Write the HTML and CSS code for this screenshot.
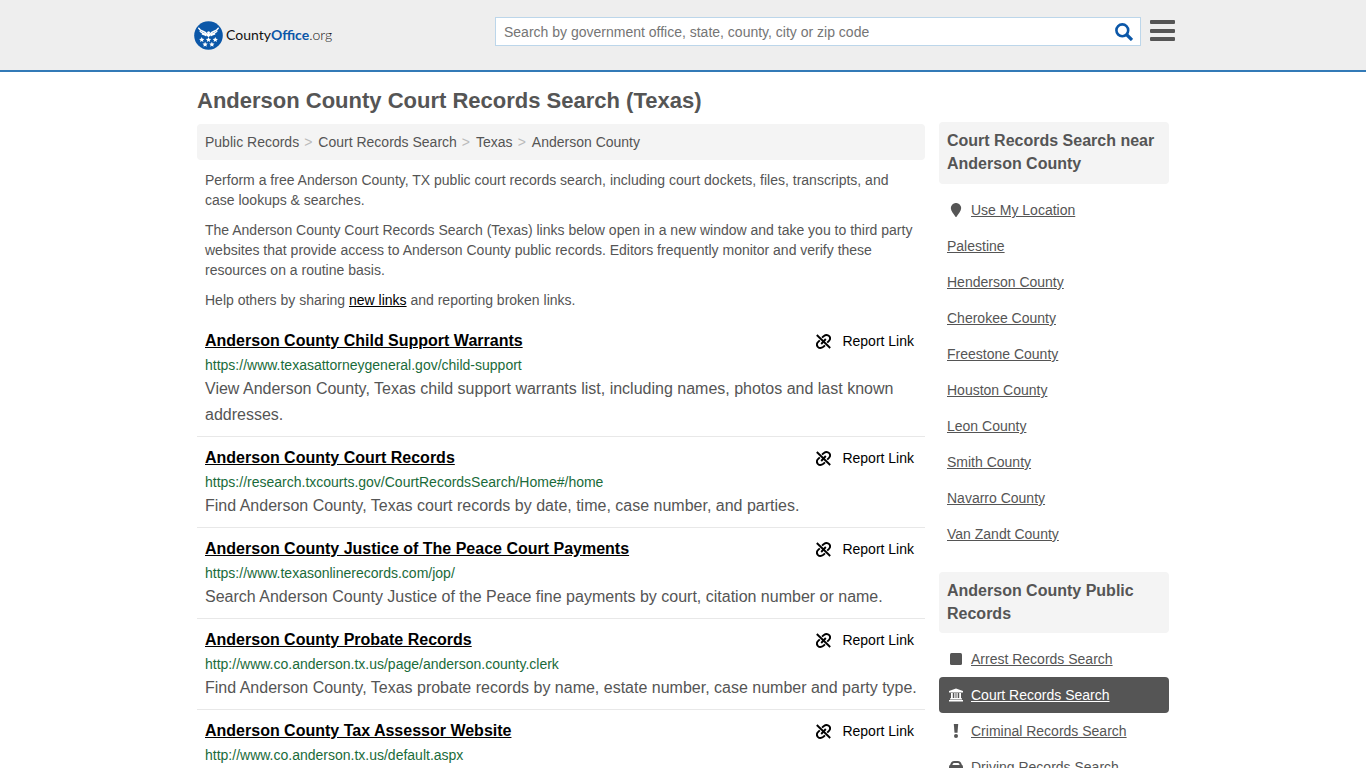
FILE: index.html
```html
<!DOCTYPE html>
<html lang="en">
<head>
<meta charset="utf-8">
<meta name="viewport" content="width=device-width, initial-scale=1">
<title>Anderson County Court Records Search (Texas)</title>
<link rel="stylesheet" href="styles.css">
</head>
<body>
<svg class="sprite" aria-hidden="true">
  <symbol id="i-unlink" viewBox="0 0 15 15">
    <g fill="none" stroke="currentColor" stroke-width="1.900">
      <path d="M.8 1 14.200 14"/>
      <path d="M6 3.600 7.600 2.200C9.500.8 12 1 13.200 2.200 14.300 3.600 14.200 5.600 13 6.800L11.200 8.600"/>
      <path d="M9 11.400 7.400 12.800C5.500 14.200 3 14 1.800 12.800.7 11.400.8 9.400 2 8.200L3.800 6.400"/>
      <path d="M9.800 5 5.200 10"/>
    </g>
  </symbol>
</svg>

<header class="site-header">
  <div class="header-inner">
    <a class="logo" href="#">
      <svg class="logo-mark" viewBox="0 0 30 30" aria-hidden="true">
        <circle cx="15" cy="15" r="14.800" fill="#0b57a8"/>
        <g fill="none" stroke="#fff" stroke-linecap="round">
          <path stroke-width="1.700" d="M5 7.500c1.500 3 4.500 2.700 6.500 4.200 1 .8 1.500 1.800 2.300 2.800M25 7.500c-1.500 3-4.500 2.700-6.500 4.200-1 .8-1.500 1.800-2.300 2.800"/>
          <path stroke-width="1.300" d="M6.300 10.800c1.700 1.800 3.700 1.500 5.700 3.200M23.700 10.800c-1.700 1.800-3.700 1.500-5.700 3.200M8.500 13.500c1.500.8 2.700.8 4 1.700M21.500 13.500c-1.500.8-2.700.8-4 1.700"/>
        </g>
        <path fill="#fff" d="M13.500 11.500 15 10.600l1.700.8-.5 1.200.8 2.400-2 1.700-2-1.700.8-2z"/>
        <g fill="#fff">
          <path id="star" d="M8 16.600l.8 1.700 1.900.2-1.400 1.300.4 1.900L8 20.800l-1.700.9.4-1.900-1.400-1.300 1.900-.2z"/>
          <use href="#star" x="7"/><use href="#star" x="14"/>
          <use href="#star" x="3.500" y="4.900"/><use href="#star" x="10.500" y="4.900"/>
        </g>
      </svg>
      <span class="logo-text">County<b>Office</b><span class="logo-tld">.org</span></span>
    </a>
    <form class="search" role="search">
      <input class="search-input" type="search" aria-label="Search" placeholder="Search by government office, state, county, city or zip code">
      <button class="search-button" type="button" aria-label="Submit search">
        <svg viewBox="0 0 18 18" aria-hidden="true"><circle cx="7.300" cy="7.300" r="5.900" fill="none" stroke="#0b57a8" stroke-width="2.600"/><path d="M11.500 11.500 17 17" stroke="#0b57a8" stroke-width="3.200"/></svg>
      </button>
    </form>
    <button class="menu-button" type="button" aria-label="Menu">
      <svg viewBox="0 0 25 22" aria-hidden="true"><path fill="#555" d="M1 0h23q1 0 1 1v2q0 1-1 1H1Q0 4 0 3V1q0-1 1-1zM1 9h23q1 0 1 1v2q0 1-1 1H1q-1 0-1-1v-2q0-1 1-1zM1 17h23q1 0 1 1v2q0 1-1 1H1q-1 0-1-1v-2q0-1 1-1z"/></svg>
    </button>
  </div>
</header>

<div class="page">
  <main class="main">
    <h1>Anderson County Court Records Search (Texas)</h1>
    <nav aria-label="Breadcrumb">
      <ol class="breadcrumb">
        <li><a href="#">Public Records</a></li>
        <li><a href="#">Court Records Search</a></li>
        <li><a href="#">Texas</a></li>
        <li><a href="#">Anderson County</a></li>
      </ol>
    </nav>
    <div class="intro">
      <p>Perform a free Anderson County, TX public court records search, including court dockets, files, transcripts, and case lookups &amp; searches.</p>
      <p>The Anderson County Court Records Search (Texas) links below open in a new window and take you to third party websites that provide access to Anderson County public records. Editors frequently monitor and verify these resources on a routine basis.</p>
      <p>Help others by sharing <a href="#">new links</a> and reporting broken links.</p>
    </div>
    <article class="record">
      <div class="record-head"><h2><a href="#">Anderson County Child Support Warrants</a></h2><a class="report" href="#"><svg aria-hidden="true"><use href="#i-unlink"/></svg>Report Link</a></div>
      <div class="url">https://www.texasattorneygeneral.gov/child-support</div>
      <p>View Anderson County, Texas child support warrants list, including names, photos and last known addresses.</p>
    </article>
    <article class="record">
      <div class="record-head"><h2><a href="#">Anderson County Court Records</a></h2><a class="report" href="#"><svg aria-hidden="true"><use href="#i-unlink"/></svg>Report Link</a></div>
      <div class="url">https://research.txcourts.gov/CourtRecordsSearch/Home#/home</div>
      <p>Find Anderson County, Texas court records by date, time, case number, and parties.</p>
    </article>
    <article class="record">
      <div class="record-head"><h2><a href="#">Anderson County Justice of The Peace Court Payments</a></h2><a class="report" href="#"><svg aria-hidden="true"><use href="#i-unlink"/></svg>Report Link</a></div>
      <div class="url">https://www.texasonlinerecords.com/jop/</div>
      <p>Search Anderson County Justice of the Peace fine payments by court, citation number or name.</p>
    </article>
    <article class="record">
      <div class="record-head"><h2><a href="#">Anderson County Probate Records</a></h2><a class="report" href="#"><svg aria-hidden="true"><use href="#i-unlink"/></svg>Report Link</a></div>
      <div class="url">http://www.co.anderson.tx.us/page/anderson.county.clerk</div>
      <p>Find Anderson County, Texas probate records by name, estate number, case number and party type.</p>
    </article>
    <article class="record">
      <div class="record-head"><h2><a href="#">Anderson County Tax Assessor Website</a></h2><a class="report" href="#"><svg aria-hidden="true"><use href="#i-unlink"/></svg>Report Link</a></div>
      <div class="url">http://www.co.anderson.tx.us/default.aspx</div>
    </article>
  </main>

  <aside class="sidebar">
    <section class="nearby">
      <h2>Court Records Search near Anderson County</h2>
      <ul>
        <li><a href="#"><svg viewBox="0 0 18 14" aria-hidden="true"><path d="M9 0a5 5 0 0 1 5.200 5c0 3-3 6-4.500 8.500q-.7 1-1.400 0C6.800 11 3.800 8 3.800 5A5 5 0 0 1 9 0z"/></svg><span>Use My Location</span></a></li>
        <li><a href="#"><span>Palestine</span></a></li>
        <li><a href="#"><span>Henderson County</span></a></li>
        <li><a href="#"><span>Cherokee County</span></a></li>
        <li><a href="#"><span>Freestone County</span></a></li>
        <li><a href="#"><span>Houston County</span></a></li>
        <li><a href="#"><span>Leon County</span></a></li>
        <li><a href="#"><span>Smith County</span></a></li>
        <li><a href="#"><span>Navarro County</span></a></li>
        <li><a href="#"><span>Van Zandt County</span></a></li>
      </ul>
    </section>
    <section>
      <h2>Anderson County Public Records</h2>
      <ul>
        <li><a href="#"><svg viewBox="0 0 18 14" aria-hidden="true"><rect x="3" y="1" width="12" height="12" rx="1.500"/></svg><span>Arrest Records Search</span></a></li>
        <li><a class="current" href="#" aria-current="page"><svg viewBox="0 0 18 14" aria-hidden="true"><path d="M9 .5 16 3v1.500H2V3zM4 5h1.800v5h1.500V5h1.200v5h1V5h1.200v5h1.500V5H14v5l1 .5v1H3v-1l1-.5zM2 12h14v1.600H2z"/></svg><span>Court Records Search</span></a></li>
        <li><a href="#"><svg viewBox="0 0 18 14" aria-hidden="true"><path d="M6.800 0h4.400l-.7 8.800h-3z"/><circle cx="9" cy="12" r="2"/></svg><span>Criminal Records Search</span></a></li>
        <li><a href="#"><svg viewBox="0 0 18 14" aria-hidden="true"><path fill-rule="evenodd" d="M7 1h4q2.200 0 3 1.800l.8 1.900Q16 5.300 16 7v6h-3v-2H5v2H2V7q0-1.700 1.200-2.300L4 2.800Q4.800 1 7 1zM7 3q-.8 0-1.100.7L5.300 5h7.400l-.6-1.300Q11.800 3 11 3z"/></svg><span>Driving Records Search</span></a></li>
      </ul>
    </section>
  </aside>
</div>
</body>
</html>
```
FILE: styles.css
```css
* { box-sizing: border-box; }
body { margin: 0; background: #fff; color: #555; font: 14px/20px "Liberation Sans", Arial, sans-serif; }
h1, h2, p, ul, ol { margin: 0; padding: 0; }
ul, ol { list-style: none; }
a { color: inherit; }
button { border: 0; padding: 0; background: none; cursor: pointer; }
.sprite { display: none; }

.site-header { background: #eee; border-bottom: 2px solid #337ab7; }
.header-inner { max-width: 984px; height: 70px; margin: 0 auto; padding: 0 0 0 3px; display: flex; align-items: center; }
.logo { display: flex; align-items: center; gap: 3px; flex: 1; text-decoration: none; color: #111; }
.logo-mark { width: 29px; height: 29px; }
.logo-text { font: 14px/20px Lato, sans-serif; }
.logo-text b { color: #0b57a8; }
.logo-tld { font-weight: 300; }
.search { display: flex; width: 646px; max-width: 66%; height: 29px; margin-bottom: 8px; border: 1px solid #bcd6ea; background: #fff; }
.search-input { flex: 1; min-width: 0; border: 0; padding: 2px 8px 0; background: none; font: inherit; color: #555; outline: 0; }
.search-input::placeholder { color: #757575; }
.search-button { width: 33px; padding-top: 1px; display: grid; place-items: center; }
.search-button svg { width: 18px; height: 18px; }
.menu-button { margin: 0 0 8px 9px; }
.menu-button svg { display: block; width: 25px; height: 22px; }

.page { max-width: 972px; margin: 0 auto; display: flex; gap: 14px; align-items: flex-start; }
.main { flex: 1; min-width: 0; padding-top: 17px; }
h1 { font-size: 22px; line-height: 24px; margin-bottom: 11px; }
.breadcrumb { display: flex; padding: 8px; background: #f4f4f4; border-radius: 4px; }
.breadcrumb a { text-decoration: none; }
.breadcrumb li + li::before { content: ">"; padding: 0 6px 0 5px; color: #bbb; }
.intro { padding: 0 8px; }
.intro p { margin: 10px 0; }
.intro a { color: #000; }
.record { padding: 9px 8px 8px; border-bottom: 1px solid #e8e8e8; }
.record:last-child { border: 0; }
.record-head { display: flex; justify-content: space-between; line-height: 24px; margin-bottom: 2px; color: #000; }
.record h2 { font-size: 16px; line-height: 24px; }
.record p { padding-top: 1px; font-size: 16px; line-height: 26px; }
.url { color: #1a6b3a; }
.report { display: flex; align-items: center; gap: 11px; padding-right: 3px; text-decoration: none; }
.report svg { width: 15px; height: 15px; }

.sidebar { width: 230px; padding-top: 50px; }
.sidebar section { margin-bottom: 20px; }
.sidebar h2 { padding: 7px 8px 8px; margin-bottom: 8px; font-size: 16px; line-height: 23px; background: #f4f4f4; border-radius: 4px; }
.sidebar .nearby h2 { padding-bottom: 9px; }
.sidebar li a { display: flex; align-items: center; gap: 6px; padding: 8px; border-radius: 4px; text-decoration: none; }
.sidebar li span { text-decoration: underline; }
.sidebar li svg { width: 18px; height: 14px; fill: currentColor; }
.sidebar .current { background: #555; color: #fff; }
```
